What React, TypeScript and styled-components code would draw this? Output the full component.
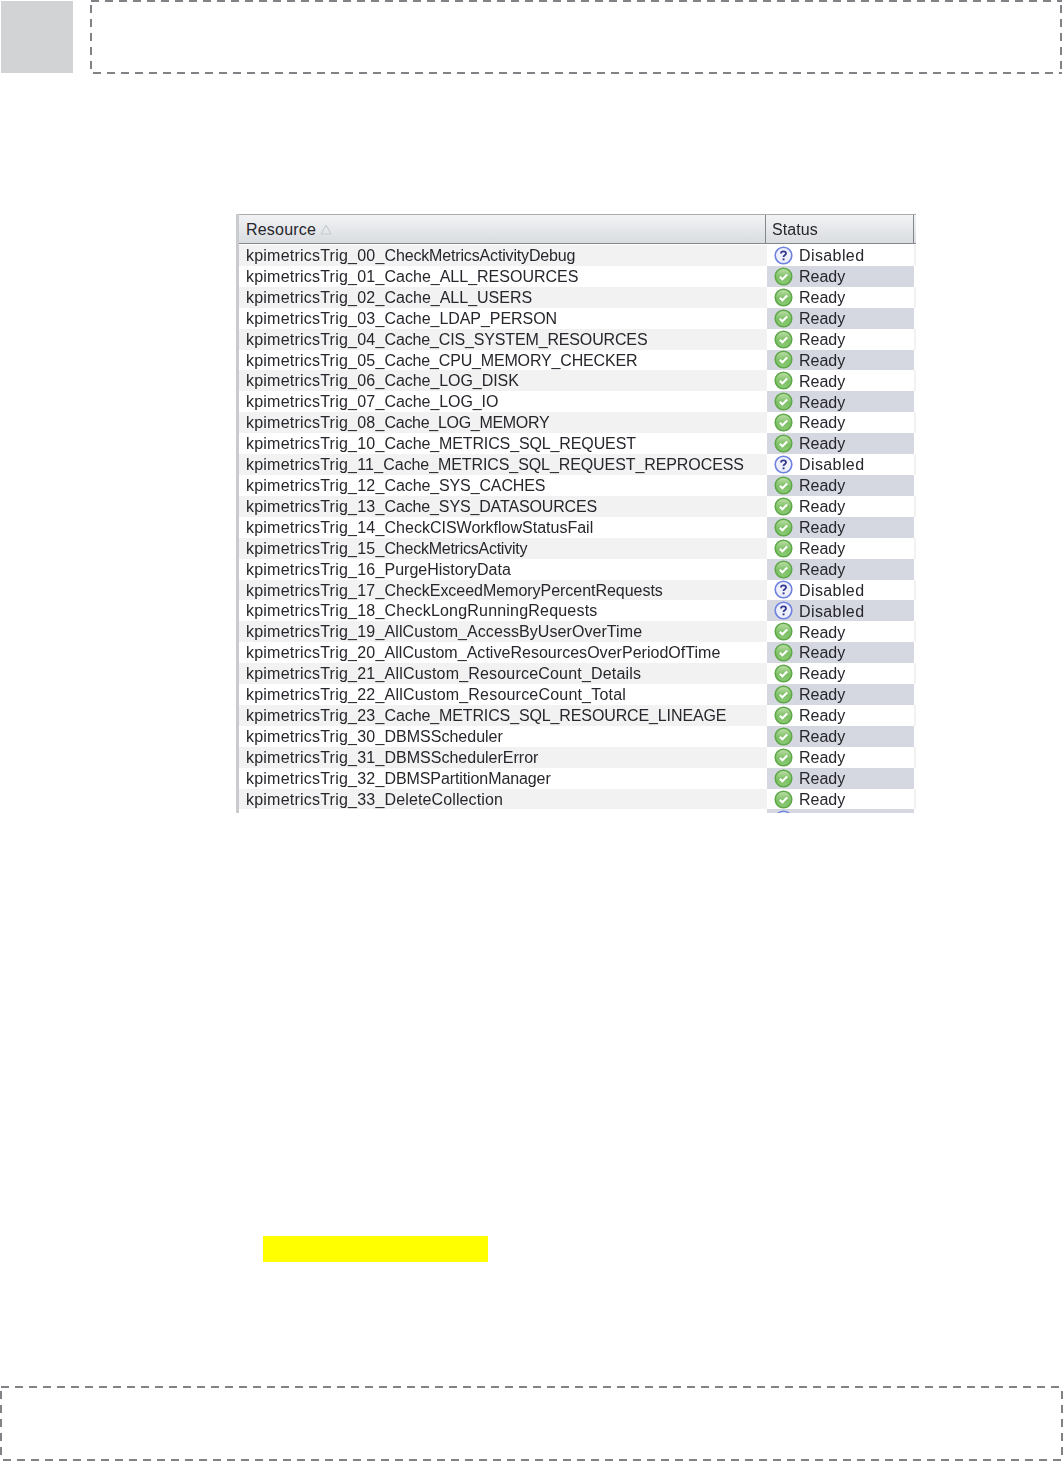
import React from "react";
import styled, { createGlobalStyle } from "styled-components";

type Trigger = { id: string; rest: string; ready: boolean; tracking: number };

const row = (id: string, rest: string, ready = true, tracking = 0): Trigger => ({ id, rest, ready, tracking });

const rows: Trigger[] = [
  row("00", "CheckMetricsActivityDebug", false, -0.16),
  row("01", "Cache_ALL_RESOURCES"),
  row("02", "Cache_ALL_USERS"),
  row("03", "Cache_LDAP_PERSON", true, -0.05),
  row("04", "Cache_CIS_SYSTEM_RESOURCES", true, -0.15),
  row("05", "Cache_CPU_MEMORY_CHECKER", true, -0.16),
  row("06", "Cache_LOG_DISK", true, -0.07),
  row("07", "Cache_LOG_IO", true, -0.08),
  row("08", "Cache_LOG_MEMORY", true, -0.3),
  row("10", "Cache_METRICS_SQL_REQUEST", true, -0.12),
  row("11", "Cache_METRICS_SQL_REQUEST_REPROCESS", false, -0.09),
  row("12", "Cache_SYS_CACHES", true, -0.12),
  row("13", "Cache_SYS_DATASOURCES", true, -0.14),
  row("14", "CheckCISWorkflowStatusFail"),
  row("15", "CheckMetricsActivity", true, -0.25),
  row("16", "PurgeHistoryData"),
  row("17", "CheckExceedMemoryPercentRequests", false, -0.03),
  row("18", "CheckLongRunningRequests", false, 0.2),
  row("19", "AllCustom_AccessByUserOverTime", true, 0.07),
  row("20", "AllCustom_ActiveResourcesOverPeriodOfTime", true, 0.03),
  row("21", "AllCustom_ResourceCount_Details", true, 0.19),
  row("22", "AllCustom_ResourceCount_Total", true, 0.2),
  row("23", "Cache_METRICS_SQL_RESOURCE_LINEAGE", true, -0.12),
  row("30", "DBMSScheduler"),
  row("31", "DBMSSchedulerError"),
  row("32", "DBMSPartitionManager", true, -0.1),
  row("33", "DeleteCollection", true, 0.12),
];

const ReadyIcon = () => (
  <svg width="19" height="19" viewBox="0 0 19 19">
    <defs>
      <linearGradient id="readyFill" x1="0" y1="0" x2="0" y2="1">
        <stop offset="0" stopColor="#bfe0aa" />
        <stop offset="0.55" stopColor="#7cc064" />
        <stop offset="1" stopColor="#8ecb78" />
      </linearGradient>
    </defs>
    <circle cx="9.5" cy="9.5" r="8.3" fill="url(#readyFill)" stroke="#5fa84a" strokeWidth="1.5" />
    <path d="M5.8 9.7l2.6 2.5 4.8-4.6" fill="none" stroke="#fff" strokeWidth="2.1" />
  </svg>
);

const DisabledIcon = () => (
  <svg width="19" height="19" viewBox="0 0 19 19">
    <circle cx="9.5" cy="9.5" r="8.3" fill="#eef0fb" stroke="#6f82e0" strokeWidth="1.6" />
    <path
      d="M7 7.6c0-1.5 1.1-2.3 2.5-2.3s2.5.8 2.5 2.1c0 1.9-2.5 1.9-2.5 3.7"
      fill="none"
      stroke="#33388f"
      strokeWidth="1.8"
    />
    <rect x="8.6" y="12.4" width="1.9" height="1.9" fill="#33388f" />
  </svg>
);

const SortArrow = () => (
  <svg width="12" height="11" viewBox="0 0 12 11">
    <path d="M6 1l5 9H1z" fill="#e3e7ea" stroke="#c3c8cd" strokeWidth="1" />
  </svg>
);

const App: React.FC = () => {
  return (
    <Page>
      <GlobalStyle />
      <Header>
        <ChapterTab />
        <DashedBox />
      </Header>
      <Main>
        <TablePanel>
          <HeadRow>
            <ResourceHead>
              Resource <SortArrow />
            </ResourceHead>
            <StatusHead>Status</StatusHead>
          </HeadRow>
          {rows.map((r, i) => (
            <Row key={r.id} $odd={i % 2 === 1}>
              <ResourceCell>
                <Prefix>kpimetricsTrig_{r.id}_</Prefix>
                <Rest $tracking={r.tracking}>{r.rest}</Rest>
              </ResourceCell>
              <StatusCell $odd={i % 2 === 1}>
                {r.ready ? <ReadyIcon /> : <DisabledIcon />}
                <StatusText $ready={r.ready}>{r.ready ? "Ready" : "Disabled"}</StatusText>
              </StatusCell>
            </Row>
          ))}
          {/* next row, cut off by the bottom of the screenshot */}
          <Row $odd>
            <ResourceCell />
            <StatusCell $odd>
              <DisabledIcon />
            </StatusCell>
          </Row>
        </TablePanel>
        <Highlight />
      </Main>
      <Footer>
        <DashedBox />
      </Footer>
    </Page>
  );
};

export default App;

const GlobalStyle = createGlobalStyle`
  html, body {
    margin: 0;
    padding: 0;
    background: #fff;
  }
`;

const Page = styled.div`
  width: 1063px;
  height: 1461px;
  display: flex;
  flex-direction: column;
  font-family: "Liberation Sans", Arial, sans-serif;
  overflow: hidden;
`;

const Header = styled.header`
  display: flex;
  gap: 17px;
  height: 74px;
  padding: 0 1px;
  flex: none;
`;

const ChapterTab = styled.div`
  width: 72px;
  height: 72px;
  margin-top: 1px;
  background: #d1d3d4;
  flex: none;
`;

const DashedBox = styled.div`
  flex: 1;
  --dash: #808285;
  background-image:
    repeating-linear-gradient(90deg, var(--dash) 1px 9px, transparent 9px 15px),
    repeating-linear-gradient(90deg, var(--dash) 3px 11px, transparent 11px 17px),
    repeating-linear-gradient(180deg, var(--dash) 5px 13px, transparent 13px 19px),
    repeating-linear-gradient(180deg, var(--dash) 5px 13px, transparent 13px 19px);
  background-size: 100% 2px, 100% 2px, 2px 100%, 2px 100%;
  background-position: 0 0, 0 100%, 0 0, 100% 0;
  background-repeat: no-repeat;
`;

const Footer = styled.footer`
  display: flex;
  height: 75px;
  flex: none;
`;

const Main = styled.main`
  flex: 1;
  display: flex;
  flex-direction: column;
  padding: 140px 0 0 236px;
`;

const TablePanel = styled.section`
  width: 680px;
  height: 599px;
  flex: none;
  overflow: hidden;
  border-left: 3px solid #c9cbce;
  box-sizing: border-box;
  font-size: 16px;
  color: #26262c;
  filter: blur(0.4px);
`;

const HeadRow = styled.div`
  display: flex;
  height: 30px;
  box-sizing: border-box;
  background: linear-gradient(#f2f3f5, #d9dce0);
  border-top: 1px solid #a9abae;
  border-bottom: 1px solid #85888b;
  margin-bottom: 1px;
`;

const ResourceHead = styled.div`
  width: 527px;
  flex: none;
  box-sizing: border-box;
  display: flex;
  align-items: center;
  gap: 4px;
  padding: 1px 0 0 7px;
  border-right: 1px solid #85888b;
  letter-spacing: 0.2px;
`;

const StatusHead = styled.div`
  width: 148px;
  flex: none;
  box-sizing: border-box;
  display: flex;
  align-items: center;
  padding: 1px 0 0 6px;
  border-right: 1px solid #85888b;
  letter-spacing: 0.1px;
`;

const Row = styled.div<{ $odd: boolean }>`
  display: flex;
  height: 20.92px;
  background: ${p => (p.$odd ? "#ffffff" : "#f2f2f2")};
`;

const ResourceCell = styled.div`
  width: 528px;
  flex: none;
  box-sizing: border-box;
  padding-left: 7px;
  line-height: 21px;
  white-space: nowrap;
`;

const Prefix = styled.span`
  letter-spacing: 0.22px;
`;

const Rest = styled.span<{ $tracking: number }>`
  letter-spacing: ${p => p.$tracking}px;
`;

const StatusCell = styled.div<{ $odd: boolean }>`
  width: 147px;
  flex: none;
  box-sizing: border-box;
  display: flex;
  align-items: center;
  gap: 6px;
  padding-left: 7px;
  background: ${p => (p.$odd ? "#d5d8e0" : "#ffffff")};
`;

const StatusText = styled.span<{ $ready: boolean }>`
  padding-top: 1.5px;
  letter-spacing: ${p => (p.$ready ? 0 : 0.4)}px;
`;

const Highlight = styled.div`
  width: 225px;
  height: 26px;
  margin: 423px 0 0 27px;
  background: #ffff00;
  flex: none;
`;
